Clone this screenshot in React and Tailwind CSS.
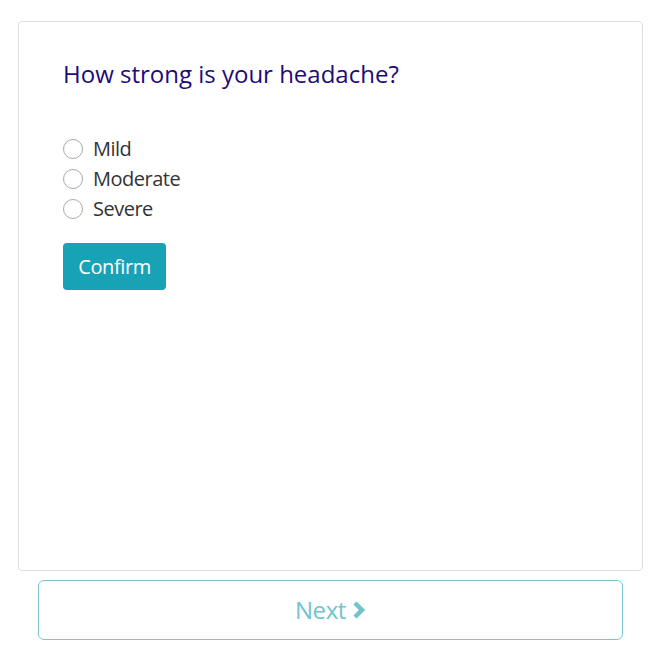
export default function App() {
  const options = ['Mild', 'Moderate', 'Severe'];
  return (
    <div className="w-[663px] h-[669px] bg-white pt-[21px] pl-[18px]" style={{ fontFamily: '"Open Sans", sans-serif' }}>
      <div className="w-[625px] h-[550px] border border-[#dedede] rounded-[4px] px-[44px] pt-[37px]">
        <h1 className="text-[24px] leading-[30px] text-[#1d0c78] font-normal">How strong is your headache?</h1>
        <div className="mt-[45px] flex flex-col">
          {options.map((o) => (
            <label key={o} className="flex items-center h-[30px] text-[20px] text-[#333] tracking-[-0.5px]">
              <span className="w-[20px] h-[20px] rounded-full border border-[#aaa] bg-white mr-[10px]" />
              {o}
            </label>
          ))}
        </div>
        <button className="mt-[19px] w-[103px] h-[47px] rounded-[4px] bg-[#18a2b6] text-white text-[20px] tracking-[-0.4px]">
          Confirm
        </button>
      </div>
      <button className="mt-[9px] ml-[20px] w-[585px] h-[60px] rounded-[6px] border border-[#7cc6cf] flex items-center justify-center gap-[6px] text-[24px] text-[#70c4cd] tracking-[-0.4px]">
        Next
        <svg width="14" height="20" viewBox="0 0 14 20">
          <polyline points="3,3 10,10 3,17" fill="none" stroke="#70c4cd" strokeWidth="4.5" strokeLinejoin="miter" />
        </svg>
      </button>
    </div>
  );
}
